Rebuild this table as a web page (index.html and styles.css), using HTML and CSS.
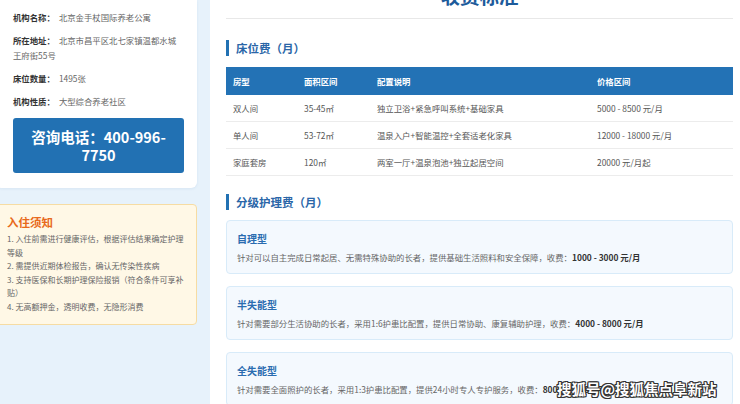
FILE: index.html
```html
<!DOCTYPE html>
<html lang="zh-CN">
<head>
<meta charset="utf-8">
<title>收费标准</title>
<link rel="stylesheet" href="styles.css">
</head>
<body>
<div class="page">
  <aside class="side">
    <div class="info-card">
      <div class="info-item"><span class="label">机构名称：</span>北京金手杖国际养老公寓</div>
      <div class="info-item"><span class="label">所在地址：</span>北京市昌平区北七家镇温都水城王府街55号</div>
      <div class="info-item"><span class="label">床位数量：</span>1495张</div>
      <div class="info-item"><span class="label">机构性质：</span>大型综合养老社区</div>
      <div class="call-btn">咨询电话：400-996-7750</div>
    </div>
    <div class="notice">
      <div class="notice-title">入住须知</div>
      <div class="notice-line">1. 入住前需进行健康评估，根据评估结果确定护理等级</div>
      <div class="notice-line">2. 需提供近期体检报告，确认无传染性疾病</div>
      <div class="notice-line">3. 支持医保和长期护理保险报销（符合条件可享补贴）</div>
      <div class="notice-line">4. 无高额押金，透明收费，无隐形消费</div>
    </div>
  </aside>
  <main class="main">
    <h1 class="page-title">收费标准</h1>
    <h2 class="sec-title">床位费（月）</h2>
    <table class="fee-table">
      <colgroup>
        <col class="c1"><col class="c2"><col class="c3"><col class="c4">
      </colgroup>
      <thead>
        <tr><th>房型</th><th>面积区间</th><th>配置说明</th><th>价格区间</th></tr>
      </thead>
      <tbody>
        <tr><td>双人间</td><td>35-45㎡</td><td>独立卫浴+紧急呼叫系统+基础家具</td><td>5000 - 8500 元/月</td></tr>
        <tr><td>单人间</td><td>53-72㎡</td><td>温泉入户+智能温控+全套适老化家具</td><td>12000 - 18000 元/月</td></tr>
        <tr><td>家庭套房</td><td>120㎡</td><td>两室一厅+温泉泡池+独立起居空间</td><td>20000 元/月起</td></tr>
      </tbody>
    </table>
    <h2 class="sec-title sec-second">分级护理费（月）</h2>
    <div class="care-card">
      <div class="care-name">自理型</div>
      <div class="care-desc">针对可以自主完成日常起居、无需特殊协助的长者，提供基础生活照料和安全保障，收费：<b>1000 - 3000 元/月</b></div>
    </div>
    <div class="care-card">
      <div class="care-name">半失能型</div>
      <div class="care-desc">针对需要部分生活协助的长者，采用1:6护患比配置，提供日常协助、康复辅助护理，收费：<b>4000 - 8000 元/月</b></div>
    </div>
    <div class="care-card">
      <div class="care-name">全失能型</div>
      <div class="care-desc">针对需要全面照护的长者，采用1:3护患比配置，提供24小时专人专护服务，收费：<b>8000 - 15000 元/月</b></div>
    </div>
  </main>
</div>
<div class="watermark">搜狐号@搜狐焦点阜新站</div>
</body>
</html>
```

FILE: styles.css
```css
html, body {
  margin: 0;
  padding: 0;
  height: 404px;
  overflow: hidden;
}
body {
  background: #e7f2fb;
  font-family: "Noto Sans CJK SC", "Noto Sans", sans-serif;
  color: #555;
  position: relative;
}
.page {
  display: flex;
  gap: 13px;
  align-items: flex-start;
}
.side {
  width: 201px;
  margin-left: -4px;
  flex: none;
}
.info-card {
  background: #ffffff;
  border-radius: 0 0 6px 6px;
  padding: 10px 13px 15px 17px;
  box-shadow: 0 1px 3px rgba(30, 90, 150, 0.08);
}
.info-item {
  font-size: 8.4px;
  line-height: 15px;
  color: #666;
  margin-bottom: 8px;
}
.label {
  font-weight: bold;
  color: #333;
  margin-right: 4px;
}
.call-btn {
  margin-top: 9px;
  background: #2271b3;
  color: #fff;
  font-weight: bold;
  font-size: 14.5px;
  line-height: 18px;
  text-align: center;
  padding: 9.5px 10px;
  border-radius: 3px;
}
.notice {
  margin-top: 16px;
  background: #fff8e6;
  border: 1px solid #f6dca3;
  border-radius: 4px;
  padding: 9px 8px 10px 10px;
}
.notice-title {
  color: #e8691b;
  font-weight: bold;
  font-size: 11.5px;
  line-height: 16px;
  margin-bottom: 2px;
}
.notice-line {
  font-size: 8px;
  line-height: 13.6px;
  color: #666;
}
.main {
  flex: 1;
  background: #ffffff;
  height: 404px;
  padding: 0 7px 0 16px;
  min-width: 0;
}
.page-title {
  margin: -16px 0 0;
  font-size: 19.5px;
  line-height: 24px;
  font-weight: bold;
  color: #1d5b9b;
  text-align: center;
  padding-bottom: 10px;
  border-bottom: 1px solid #e8e8e8;
}
.sec-title {
  margin: 21px 0 11px;
  height: 16px;
  line-height: 16px;
  border-left: 3px solid #2271b3;
  padding-left: 7px;
  font-size: 11.5px;
  font-weight: bold;
  color: #2a66a8;
}
.sec-second {
  margin-top: 18px;
  margin-bottom: 10px;
}
.fee-table {
  width: 100%;
  border-collapse: collapse;
  table-layout: fixed;
  font-size: 8.4px;
}
.c1 { width: 71px; }
.c2 { width: 73px; }
.c3 { width: 220px; }
.fee-table th {
  background: #2372b5;
  color: #fff;
  font-weight: bold;
  text-align: left;
  height: 28px;
  padding: 0 7px;
}
.fee-table td {
  height: 26px;
  padding: 0 7px;
  color: #555;
  border-bottom: 1px solid #ececec;
}
.care-card {
  background: #f4f9fe;
  border: 1px solid #d8ebf9;
  border-radius: 4px;
  padding: 9px 10px;
  margin-bottom: 12px;
}
.care-name {
  font-size: 10px;
  font-weight: bold;
  line-height: 18px;
  color: #2a6cb0;
}
.care-desc {
  margin-top: 2px;
  font-size: 8.4px;
  line-height: 14px;
  color: #666;
  white-space: nowrap;
}
.care-desc b {
  color: #333;
}
.watermark {
  position: absolute;
  left: 557px;
  top: 379px;
  font-size: 14.5px;
  line-height: 20px;
  font-weight: bold;
  color: #fff;
  white-space: nowrap;
  text-shadow: 1px 1px 0 #333, -1px -1px 0 #333, 1px -1px 0 #333, -1px 1px 0 #333, 0 1px 0 #333, 0 -1px 0 #333, 1px 0 0 #333, -1px 0 0 #333;
}
```
